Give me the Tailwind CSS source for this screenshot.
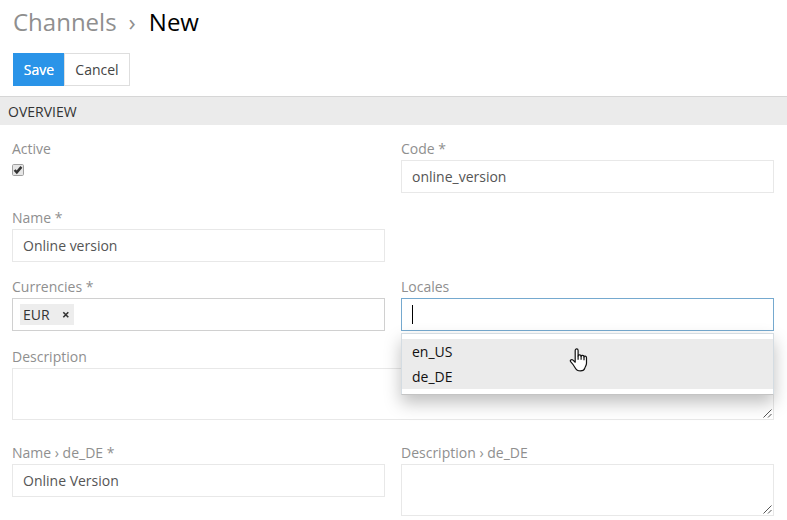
<!DOCTYPE html>
<html lang="en">
<head>
<meta charset="utf-8">
<title>Channels › New</title>
<script src="https://cdn.jsdelivr.net/npm/@tailwindcss/browser@4"></script>
</head>
<body class="w-[787px] h-[520px] overflow-hidden bg-white font-['Open_Sans',sans-serif] text-[14px] leading-5 text-[#555]">
<header class="h-24 pl-[13px]">
  <h1 class="flex h-[53px] items-start pt-1.5 text-[24px] leading-8"><a class="text-[#8f8f8f]">Channels</a><span class="ml-3 mr-[13px] text-[#8f8f8f]">›</span><span class="text-black">New</span></h1>
  <div class="flex h-[33px]">
    <button class="w-[51px] bg-[#2a94e8] pl-px text-white [text-shadow:0_0_0.5px_white]">Save</button>
    <button class="w-[66px] border border-[#dedede] text-[#444]">Cancel</button>
  </div>
</header>
<h2 class="h-[29px] border-t border-[#d6d6d6] bg-[#ebebeb] pl-2 pt-[5px] text-[#333]">OVERVIEW</h2>
<main class="grid grid-cols-[373px_373px] gap-x-4 gap-y-[15px] pl-3 pt-3.5 text-[#8f8f8f]">
  <div class="h-[54px]">
    <div class="h-[25px]">Active</div>
    <svg class="block" width="12" height="12" viewBox="0 0 12 12"><rect x=".5" y=".5" width="11" height="11" rx="1.2" fill="#e6e6e6" stroke="#a0a0a0"/><path d="M2.6 6 4.8 8.4 9.4 2.9" fill="none" stroke="#333" stroke-width="2.5"/></svg>
  </div>
  <div>
    <div class="h-[21px]">Code *</div>
    <div class="h-[33px] border border-[#e8e8e8] px-2.5 pt-1.5 text-[#555]">online_version</div>
  </div>
  <div>
    <div class="h-[21px]">Name *</div>
    <div class="h-[33px] border border-[#e8e8e8] px-2.5 pt-1.5 text-[#555]">Online version</div>
  </div>
  <div></div>
  <div>
    <div class="h-[21px]">Currencies *</div>
    <div class="flex h-[33px] items-center border border-[#d0d0d0] pl-[7px]">
      <div class="flex h-[21px] w-[54px] items-center justify-between bg-[#ededed] pl-[3px] pr-1 text-[#333]"><span>EUR</span><svg width="8" height="8" viewBox="0 0 8 8"><path d="m1.3 1.3 5 5m0-5-5 5" stroke="#333" stroke-width="1.6"/></svg></div>
    </div>
  </div>
  <div class="relative">
    <div class="h-[21px]">Locales</div>
    <div class="flex h-[33px] items-center border border-[#75a9cf] pl-[10px]"><span class="h-[19px] w-px bg-black"></span></div>
    <div class="absolute left-0 top-[56px] z-10 h-[62px] w-[373px] border border-[#d4dce2] border-b-[#c4c4c4] bg-white py-[5px] text-[#111] shadow-[0_8px_16px_rgba(0,0,0,0.25)]">
      <div class="h-[25px] bg-[#ebebeb] pl-2.5 pt-[3px]">en_US</div>
      <div class="h-[25px] bg-[#ebebeb] pl-2.5 pt-[3px]">de_DE</div>
      <svg class="absolute left-[167px] top-[14px]" width="19" height="24" viewBox="0 0 19 24"><path d="M6.2 14.2V2.6C6.2.4 9.1.4 9.1 2.6V8c0-1.5 3-1.5 3 .4 0-1.4 2.9-1.3 2.9.5 0-1.2 2.5-1 2.5.9v5.4c0 2.1-1.2 3.3-1.7 4.9-.5 1.9-2 2.8-4.3 2.8-2.8 0-4.3-1-5.4-3.2-1.2-2-2.5-4-4.3-5.8-1.5-1.5.7-3 2.2-1.8Z" fill="#fff" stroke="#111" stroke-width="1.2" stroke-linejoin="round"/><path d="M9.1 7.8v4M12.1 8.2v3.6M15 8.8v3.5" fill="none" stroke="#111" stroke-width="1.2"/></svg>
    </div>
  </div>
  <div class="col-span-2 mt-px">
    <div class="h-[21px]">Description</div>
    <div class="flex h-[52px] items-end justify-end border border-[#e8e8e8] p-px"><svg width="9" height="9" viewBox="0 0 9 9"><path d="m.5 8.5 8-8M5 8.5 8.5 5" stroke="#555"/></svg></div>
  </div>
  <div class="mt-2">
    <div class="h-[21px]">Name › de_DE *</div>
    <div class="h-[33px] border border-[#e8e8e8] px-2.5 pt-1.5 text-[#555]">Online Version</div>
  </div>
  <div class="mt-2">
    <div class="h-[21px]">Description › de_DE</div>
    <div class="flex h-[52px] items-end justify-end border border-[#e8e8e8] p-px"><svg width="9" height="9" viewBox="0 0 9 9"><path d="m.5 8.5 8-8M5 8.5 8.5 5" stroke="#555"/></svg></div>
  </div>
</main>
</body>
</html>
